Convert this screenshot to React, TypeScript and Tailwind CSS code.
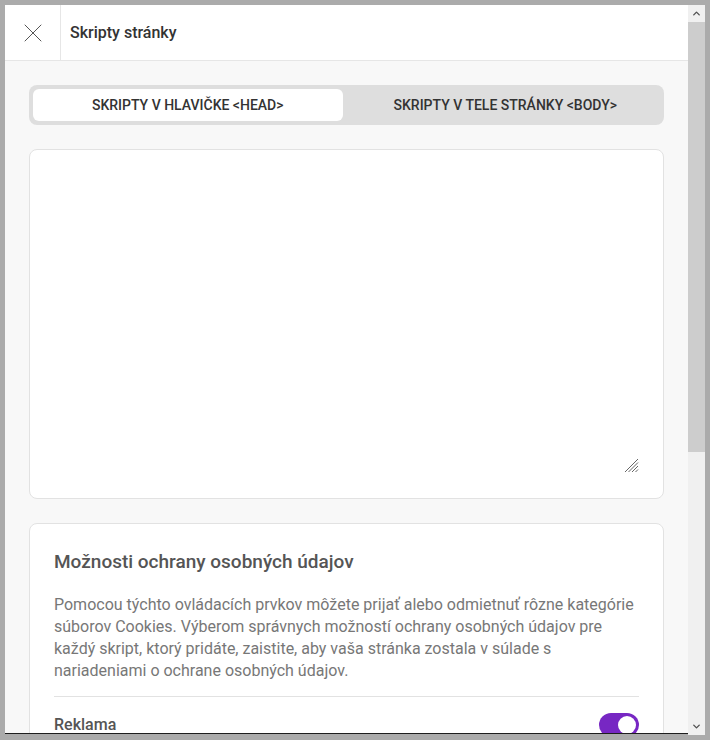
import { X, ChevronUp, ChevronDown } from 'lucide-react';

export default function App() {
    return (
        <div className="w-[710px] h-[740px] bg-[#ababab] pt-[5px] pl-[5px] pr-[5px] pb-[5px] flex font-['Roboto',sans-serif]">
            <div className="flex-1 h-[729px] border-b border-[#1e1e1e] bg-[#f8f8f8] overflow-hidden flex flex-col">
                {/* header */}
                <div className="h-[56px] shrink-0 bg-white border-b border-[#e6e6e6] flex items-stretch">
                    <button className="w-[56px] border-r border-[#e6e6e6] flex items-center justify-center text-[#555]">
                        <X className="w-[32px] h-[32px]" strokeWidth={0.75} />
                    </button>
                    <div className="pl-[9px] flex items-center text-[16px] font-medium text-[#333]">Skripty stránky</div>
                </div>

                <div className="px-[24px] pt-[24px] flex flex-col">
                    {/* tabs */}
                    <div className="h-[40px] bg-[#dedede] rounded-[8px] p-[4px] flex gap-[8px]">
                        <button className="flex-1 bg-white rounded-[6px] text-[14px] font-medium text-[#333]">
                            SKRIPTY V HLAVIČKE &lt;HEAD&gt;
                        </button>
                        <button className="flex-1 text-[14px] font-medium text-[#333]">
                            SKRIPTY V TELE STRÁNKY &lt;BODY&gt;
                        </button>
                    </div>

                    {/* textarea */}
                    <div className="mt-[24px] h-[350px] bg-white border border-[#e2e2e2] rounded-[8px] relative">
                        <svg className="absolute right-[24px] bottom-[25px]" width="15" height="15" viewBox="0 0 15 15">
                            <path d="M1 14L14 1M4.5 14L14 4.5M8 14L14 8M11.5 14L14 11.5" stroke="#666" strokeWidth="1" />
                        </svg>
                    </div>

                    {/* privacy */}
                    <div className="mt-[24px] bg-white border border-[#e2e2e2] rounded-[8px] px-[24px] pt-[26px] pb-[20px]">
                        <h2 className="text-[19px] font-medium text-[#555] leading-[24px]">Možnosti ochrany osobných údajov</h2>
                        <p className="mt-[20px] text-[16px] leading-[22px] text-[#777]">
                            Pomocou týchto ovládacích prvkov môžete prijať alebo odmietnuť rôzne kategórie súborov Cookies. Výberom správnych možností ochrany osobných údajov pre každý skript, ktorý pridáte, zaistite, aby vaša stránka zostala v súlade s nariadeniami o ochrane osobných údajov.
                        </p>
                        <div className="mt-[14px] border-t border-[#e2e2e2]" />
                        <div className="mt-[16px] flex items-center justify-between">
                            <span className="text-[16px] font-medium text-[#555]">Reklama</span>
                            <div className="w-[40px] h-[24px] rounded-full bg-[#7727c3] flex items-center justify-end pr-[3px]">
                                <div className="w-[18px] h-[18px] rounded-full bg-white" />
                            </div>
                        </div>
                    </div>
                </div>
            </div>

            {/* scrollbar */}
            <div className="w-[17px] h-[730px] bg-[#f0f0f0] flex flex-col">
                <div className="h-[17px] flex items-center justify-center text-[#505050]">
                    <ChevronUp className="w-[11px] h-[11px]" strokeWidth={3} />
                </div>
                <div className="h-[430px] bg-[#cdcdcd]" />
                <div className="flex-1" />
                <div className="h-[17px] flex items-center justify-center text-[#505050]">
                    <ChevronDown className="w-[11px] h-[11px]" strokeWidth={3} />
                </div>
            </div>
        </div>
    );
}
